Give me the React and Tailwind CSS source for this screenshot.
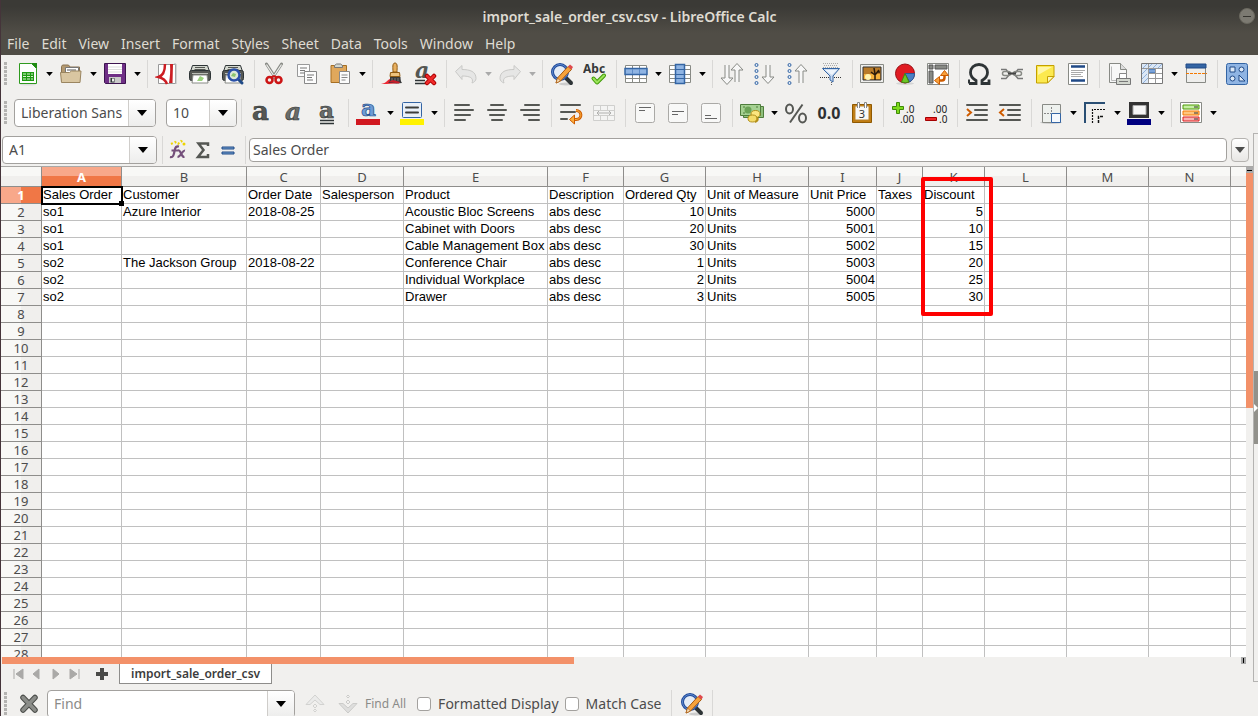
import React, { useState } from 'react'

const menus = ['File', 'Edit', 'View', 'Insert', 'Format', 'Styles', 'Sheet', 'Data', 'Tools', 'Window', 'Help']

const columns = [
    { name: 'A', width: 80 },
    { name: 'B', width: 125 },
    { name: 'C', width: 74 },
    { name: 'D', width: 83 },
    { name: 'E', width: 144 },
    { name: 'F', width: 76 },
    { name: 'G', width: 82 },
    { name: 'H', width: 103 },
    { name: 'I', width: 68 },
    { name: 'J', width: 46 },
    { name: 'K', width: 62 },
    { name: 'L', width: 82 },
    { name: 'M', width: 82 },
    { name: 'N', width: 82 },
]

const data = [
    ['Sales Order', 'Customer', 'Order Date', 'Salesperson', 'Product', 'Description', 'Ordered Qty', 'Unit of Measure', 'Unit Price', 'Taxes', 'Discount'],
    ['so1', 'Azure Interior', '2018-08-25', '', 'Acoustic Bloc Screens', 'abs desc', 10, 'Units', 5000, '', 5],
    ['so1', '', '', '', 'Cabinet with Doors', 'abs desc', 20, 'Units', 5001, '', 10],
    ['so1', '', '', '', 'Cable Management Box', 'abs desc', 30, 'Units', 5002, '', 15],
    ['so2', 'The Jackson Group', '2018-08-22', '', 'Conference Chair', 'abs desc', 1, 'Units', 5003, '', 20],
    ['so2', '', '', '', 'Individual Workplace', 'abs desc', 2, 'Units', 5004, '', 25],
    ['so2', '', '', '', 'Drawer', 'abs desc', 3, 'Units', 5005, '', 30],
]

const rowCount = 28

const Svg = ({ children }) => (
    <svg width="24" height="24" viewBox="0 0 24 24" fill="none" className="shrink-0">{children}</svg>
)

const lines = (list, color = '#555753', w = 2) => list.map(([x1, x2, y], i) => (
    <path key={i} d={`M${x1} ${y}H${x2}`} stroke={color} strokeWidth={w} strokeLinecap="round" />
))

const Printer = () => (
    <>
        <path d="M4.5 3.5h15l2 6h-19z" fill="#d3d7cf" stroke="#2e3436" />
        <path d="M7 5.5h10M6.500 7.500h11" stroke="#555753" />
        <rect x="1.500" y="8.500" width="21" height="10" rx="2" fill="#555753" stroke="#2e3436" />
        <path d="M4 11.500h16" stroke="#babdb6" />
        <path d="M5 13h14l1 8H4z" fill="#fff" stroke="#888a85" />
        <path d="M9 19l3-5 4 2-2 3z" fill="#9ad17c" />
    </>
)

const Lens = () => (
    <>
        <ellipse cx="16" cy="22" rx="7" ry="1.500" fill="#ccc" />
        <path d="M15 15l6 6" stroke="#2e3436" strokeWidth="4" strokeLinecap="round" />
        <circle cx="10" cy="10" r="7.500" fill="#e4ecf6" stroke="#204a9a" strokeWidth="3" />
        <circle cx="10" cy="10" r="7.500" stroke="#5f8ad0" strokeWidth="1" />
        <path d="M6 21l1.500-5L18 4.500l3.500 3L10.500 19z" fill="#f7a23b" stroke="#a85a10" />
        <path d="M6 21l1.500-5 3 3z" fill="#f8e0b8" stroke="#a85a10" strokeWidth=".7" />
        <path d="M18 4.500L20 2.500l3 2.500-1.500 2.500z" fill="#e0484c" />
    </>
)

const Grid = () => (
    <>
        <path d="M1.500 3.500h21v17h-21z" fill="#fff" stroke="#888a85" />
        <path d="M1.500 12.500h21M1.500 16.500h21M8.500 3.500v17M15.500 3.500v17M1.500 7.500h21" stroke="#888a85" />
    </>
)

const down = 'M6 1.500v14.500H1.500L8 22.500l6.500-6.500H10V1.500z'

const icons = {
    newDoc: (
        <Svg>
            <ellipse cx="13" cy="22.500" rx="8" ry="1" fill="#ddd" />
            <path d="M4.500 1.500h12l5 5v15h-17z" fill="#fdfffd" stroke="#2e9a1e" />
            <path d="M16 1h6v6z" fill="#1f8a12" />
            <path d="M7 10h12v9H7z" fill="#1f9a12" />
            <path d="M8 12h3M12 12h3M16 12h2M8 14.500h3M12 14.500h3M16 14.500h2M8 17h3M12 17h3M16 17h2" stroke="#d8f5d0" />
        </Svg>
    ),
    open: (
        <Svg>
            <path d="M2.500 19V4.500l1-1.500h6l1.500 2h9.500v14z" fill="#b49a72" stroke="#8a7350" />
            <path d="M6.500 5.500h13v6h-13z" fill="#fff" stroke="#777" />
            <path d="M8 8h9" stroke="#555" />
            <path d="M1.500 10.500h9l2-1.500h9.500l-1 11.500H2.500z" fill="#d9c6a1" stroke="#9a8560" />
        </Svg>
    ),
    save: (
        <Svg>
            <path d="M1.500 1.500h21v20h-20l-1-1z" fill="#6f2f86" stroke="#3d1450" />
            <path d="M5 2h14v10H5z" fill="#fff" />
            <path d="M5 5h14M5 7.500h14M5 10h14" stroke="#ddd" />
            <path d="M6 15h12v6H6z" fill="#c9c9c9" />
            <path d="M7.500 16h4v4.500h-4z" fill="#2e3436" />
            <path d="M9 16.500h2v3H9z" fill="#eee" />
        </Svg>
    ),
    pdf: (
        <Svg>
            <path d="M3.500 2.500h17v19h-17z" fill="#fff" stroke="#999" />
            <path d="M10 2c0 9-3 12-6.500 13 4 1 7 3 8.500 7" stroke="#cc1d22" strokeWidth="2.500" />
            <path d="M15 2h3l-.500 19H14c1-6 1.500-12 1-19z" fill="#cc1d22" />
            <path d="M19 2h2v20" stroke="#b5b5b5" />
        </Svg>
    ),
    print: <Svg><Printer /></Svg>,
    preview: (
        <Svg>
            <Printer />
            <path d="M17 17l4 4" stroke="#204a87" strokeWidth="3" strokeLinecap="round" />
            <circle cx="13" cy="13" r="5.500" fill="#dbe8d5" stroke="#2a50a8" strokeWidth="2.500" />
            <path d="M10 14l2-3 3 1-1 3z" fill="#8cc66e" />
        </Svg>
    ),
    cut: (
        <Svg>
            <path d="M4.500 2L13.500 16M19.500 2L10.500 16" stroke="#888a85" strokeWidth="3" strokeLinecap="round" />
            <path d="M4.500 2.500L13 15.500M19.500 2.500L11 15.500" stroke="#eeeeec" strokeWidth="1.200" />
            <circle cx="7.500" cy="18" r="3" stroke="#cc1414" strokeWidth="2.500" />
            <circle cx="16.500" cy="18" r="3" stroke="#cc1414" strokeWidth="2.500" />
            <path d="M9 15.500l3-1.500 3 1.500" stroke="#cc1414" strokeWidth="2" />
        </Svg>
    ),
    copy: (
        <Svg>
            <path d="M2.500 2.500h12v12h-12z" fill="#fcfcfc" stroke="#999" />
            <path d="M5 6h7M5 8.500h5M5 11h6" stroke="#777" />
            <path d="M9.500 9.500h12v12h-12z" fill="#fcfcfc" stroke="#888" />
            <path d="M12 13h7M12 15.500h5M12 18h6" stroke="#777" />
        </Svg>
    ),
    paste: (
        <Svg>
            <path d="M3 3.500h15.500v17H3z" fill="#e0a85c" stroke="#a66f22" />
            <path d="M6.500 5.500v-2l2-1.500h4l2 1.500v2z" fill="#d3d7cf" stroke="#777" />
            <path d="M11.500 9.500h10v12h-10z" fill="#fcfcfc" stroke="#888" />
            <path d="M13.500 13h6M13.500 15.500h6M13.500 18h4" stroke="#888" />
        </Svg>
    ),
    brush: (
        <Svg>
            <path d="M1 22c6-1 6-4 9-5l11 2c0 2-4 3-20 3z" fill="#ee2a35" />
            <path d="M13 10c0-4-1-9 2-9s2 5 2 9z" fill="#e8b060" stroke="#8f5a12" />
            <path d="M10.500 10.500h9l.500 4h-10z" fill="#edc27d" stroke="#8f5a12" />
            <path d="M10 15h10.500c0 3 .5 5 1.500 6-5 1-11 0-14 0 2-1 2-4 2-6z" fill="#38393a" />
            <path d="M12 16v3M15 16v3M18 16v3" stroke="#777" />
            <path d="M8 20l5-2 7 2-1 1.500z" fill="#c81d2a" />
        </Svg>
    ),
    clear: (
        <Svg>
            <text x="2" y="16" fontFamily="DejaVu Serif" fontWeight="bold" fontStyle="italic" fontSize="22" fill="#555753">a</text>
            <path d="M2 18.500h10M2 21.500h10" stroke="#2e3436" strokeWidth="1.500" />
            <path d="M14 14l7 7M21 14l-7 7" stroke="#a00" strokeWidth="4.500" strokeLinecap="round" />
            <path d="M14 14l7 7M21 14l-7 7" stroke="#ef2929" strokeWidth="2.500" strokeLinecap="round" />
        </Svg>
    ),
    undo: (
        <Svg>
            <path d="M1.500 9.500L8 3.500v4c8 0 14 2 14 9 0 2-2 4-4 4.500 2-5-2-7-10-7v3.500z" fill="#e6e6e5" stroke="#c9c9c7" />
        </Svg>
    ),
    redo: (
        <Svg>
            <path d="M22.500 9.500L16 3.500v4c-8 0-14 2-14 9 0 2 2 4 4 4.500-2-5 2-7 10-7v3.500z" fill="#e6e6e5" stroke="#c9c9c7" />
        </Svg>
    ),
    find: <Svg><Lens /></Svg>,
    spell: (
        <Svg>
            <text x="0" y="11" fontFamily="Noto Sans" fontWeight="bold" fontSize="12" fill="#36393a">Abc</text>
            <path d="M10.500 16.500l3.500 4 7-7" stroke="#3f9a06" strokeWidth="4" strokeLinecap="round" strokeLinejoin="round" />
            <path d="M10.500 16.500l3.500 4 7-7" stroke="#9be35a" strokeWidth="2" strokeLinecap="round" strokeLinejoin="round" />
        </Svg>
    ),
    row: (
        <Svg>
            <Grid />
            <path d="M1 6.500h22v6H1z" fill="#8fb4e3" stroke="#3465a4" strokeWidth="1.500" />
            <path d="M8.500 7v5M15.500 7v5" stroke="#5f8cc8" />
        </Svg>
    ),
    col: (
        <Svg>
            <Grid />
            <path d="M7.500 2.500h9v19h-9z" fill="#8fb4e3" stroke="#3465a4" strokeWidth="1.500" />
            <path d="M8 7.500h8M8 12.500h8M8 16.500h8" stroke="#3465a4" />
        </Svg>
    ),
    sort: (
        <Svg>
            <path d="M5 3v13H1l6 6.500 6-6.500H9V3" fill="#f7f7f7" stroke="#888a85" />
            <path d="M15 20V8h-4l6-6.500L23 8h-4v12" fill="#f7f7f7" stroke="#888a85" />
        </Svg>
    ),
    sortAsc: (
        <Svg>
            {[3, 9, 15, 21].map(y => <circle key={y} cx="3.500" cy={y} r="1.500" stroke="#3465a4" fill="#dce8f6" />)}
            <path d="M13 3v12H9l6 6.500 6-6.500h-4V3" fill="#f7f7f7" stroke="#888a85" />
        </Svg>
    ),
    sortDesc: (
        <Svg>
            {[3, 9, 15, 21].map(y => <circle key={y} cx="3.500" cy={y} r="1.500" stroke="#3465a4" fill="#dce8f6" />)}
            <path d="M13 21V9H9l6-6.500L21 9h-4v12" fill="#f7f7f7" stroke="#888a85" />
        </Svg>
    ),
    filter: (
        <Svg>
            <path d="M4 1.500h16M5 3.500h14M4 5.500h16" stroke="#aaa" strokeDasharray="1 1" />
            <path d="M3.500 6.500h17L14 14v6l-3-2v-4z" fill="#c9daf0" stroke="#3465a4" />
            <path d="M6 8h12l-5 5z" fill="#eef4fb" />
            <path d="M1 15.500h10M15 15.500h8" stroke="#333" strokeDasharray="1 1" />
            <path d="M12.500 20v3" stroke="#666" strokeDasharray="1 1" />
        </Svg>
    ),
    image: (
        <Svg>
            <path d="M.500 2.500h23v18H.500z" fill="#eeeeec" stroke="#888a85" />
            <path d="M3 5h18v13H3z" fill="#b87a28" stroke="#333" />
            <path d="M4 12h16v5H4z" fill="#f7b23b" />
            <circle cx="8" cy="15" r="3" fill="#fff3b0" />
            <path d="M15 18v-5l-4-3M15 13l4-5M15 12l-1-6M17 10h3" stroke="#2a1a0a" strokeWidth="1.500" />
        </Svg>
    ),
    chart: (
        <Svg>
            <ellipse cx="12" cy="21.500" rx="9" ry="1.500" fill="#d5d5d5" />
            <circle cx="12" cy="11.500" r="9.500" fill="#e01b22" stroke="#9a1015" />
            <path d="M12 11.500h9.500a9.500 9.500 0 0 1-5 8.500z" fill="#4a7fc4" stroke="#2c5896" />
            <path d="M12 11.500l4 8.500a9.500 9.500 0 0 1-7.500 0z" fill="#6cc624" stroke="#3f8a10" />
        </Svg>
    ),
    pivot: (
        <Svg>
            <path d="M1.500 1.500h21v21h-21z" fill="#fff" stroke="#888a85" />
            <path d="M3 3h4v4H3zM9 3h12v4H9zM3 9h4v12H3z" fill="#888a85" stroke="#555" />
            <path d="M12 18.500h4c2 0 2.500-1 2.500-3v-3" stroke="#ce5c00" strokeWidth="2.500" />
            <path d="M18.500 8.500l4 5h-8zM8.500 18.500l5-4v8z" fill="#f9a13a" stroke="#ce5c00" />
        </Svg>
    ),
    omega: (
        <Svg>
            <path d="M2 21.500h7v-3C5.500 16.500 3.500 14 3.500 10.500 3.500 6 7 2.500 12 2.500s8.500 3.500 8.500 8c0 3.500-2 6-5.500 8v3h7v-4" stroke="#2e3436" strokeWidth="2.800" />
            <path d="M2 17.500v4" stroke="#2e3436" strokeWidth="2" />
        </Svg>
    ),
    link: (
        <Svg>
            <path d="M1 7.500h5l3 4h6l3-4h5M1 16.500h5l3-3.500M15 13l3 3.500h5" stroke="#777" strokeWidth="1.500" />
            <rect x="2.500" y="9.500" width="8" height="4" rx="2" stroke="#888a85" strokeWidth="1.500" />
            <rect x="13.500" y="9.500" width="8" height="4" rx="2" stroke="#888a85" strokeWidth="1.500" />
            <path d="M8 11.500h8" stroke="#444" strokeWidth="2" />
        </Svg>
    ),
    note: (
        <Svg>
            <path d="M3.500 3.500h17.500v11l-6.500 6.500h-11z" fill="#fce94f" stroke="#c4a000" />
            <path d="M5 5h14l-14 8z" fill="#fff6a8" />
            <path d="M14.500 21v-6.500H21z" fill="#fdf6b5" stroke="#c4a000" />
        </Svg>
    ),
    header: (
        <Svg>
            <path d="M2.500 1.500h19v21h-19z" fill="#fff" stroke="#888a85" />
            <path d="M5 4.500h14M5 18.500h14" stroke="#204a87" strokeWidth="2.500" />
            <path d="M5 8.500h14M5 10.500h12M5 12.500h10M5 14.500h12" stroke="#aaa" />
        </Svg>
    ),
    printArea: (
        <Svg>
            <path d="M2.500 1.500h11l6 6v13h-17z" fill="#f8f8f8" stroke="#888a85" />
            <path d="M13.500 1.500v6h6" fill="#ddd" stroke="#888a85" />
            <path d="M4.500 4.500v14h8" stroke="#bbb" />
            <path d="M12.500 11.500h7v5h-7z" fill="#fff" stroke="#888" />
            <path d="M9.500 16.500h14v6h-14z" fill="#d3d7cf" stroke="#777" />
            <path d="M12 19.500h9" stroke="#777" />
        </Svg>
    ),
    freeze: (
        <Svg>
            <path d="M1.500 1.500h21v20h-21z" fill="#fff" stroke="#777" />
            <path d="M2 21V2h20v4H8v15" fill="#dbe7f5" />
            <path d="M2 7l5-5M2 12L12 2M2 17l5-5M3 21l5-5M13 6l4-4M18 6l4-4" stroke="#8fb0dc" />
            <path d="M8.500 7h7v4h-7z" fill="#7ba4db" stroke="#3465a4" />
            <path d="M8.500 2v19M2 6.500h20M15.500 7v14M9 11.500h13M9 16.500h13" stroke="#999" />
        </Svg>
    ),
    split: (
        <Svg>
            <path d="M2.500 2.500h19v18h-19z" fill="#eeeeec" stroke="#888a85" />
            <path d="M2 2h20v4H2z" fill="#3465a4" stroke="#204a87" />
            <path d="M2 11.500h21" stroke="#f57900" strokeDasharray="3 1" />
        </Svg>
    ),
    shapes: (
        <Svg>
            <rect x="1.500" y="1.500" width="21" height="21" rx="2" fill="#8fb4e3" stroke="#3465a4" />
            <path d="M5 5h5v5H5zM14 13v6h6z" fill="#dce8f6" stroke="#204a87" />
            <circle cx="16.500" cy="7.500" r="2.500" fill="#dce8f6" stroke="#204a87" />
            <circle cx="7.500" cy="16.500" r="2.500" fill="#dce8f6" stroke="#204a87" />
        </Svg>
    ),
    bold: (
        <Svg>
            <text x="3" y="19" fontFamily="DejaVu Serif" fontWeight="bold" fontSize="26" fill="#555753" stroke="#2e3436" strokeWidth=".6">a</text>
        </Svg>
    ),
    italic: (
        <Svg>
            <text x="3" y="19" fontFamily="DejaVu Serif" fontWeight="bold" fontStyle="italic" fontSize="25" fill="#6a6c68" stroke="#2e3436" strokeWidth=".6">a</text>
        </Svg>
    ),
    underline: (
        <Svg>
            <text x="4" y="17" fontFamily="DejaVu Serif" fontWeight="bold" fontSize="23" fill="#6a6c68" stroke="#2e3436" strokeWidth=".6">a</text>
            <path d="M5 19.500h14M5 22.500h14" stroke="#2e3436" strokeWidth="1.500" />
        </Svg>
    ),
    fontColor: (
        <Svg>
            <text x="5" y="15" fontFamily="DejaVu Serif" fontWeight="bold" fontSize="23" fill="#6d9bd6" stroke="#204a87" strokeWidth=".7">a</text>
            <path d="M0 18h24v6H0z" fill="#d11820" />
        </Svg>
    ),
    highlight: (
        <Svg>
            <rect x="2.500" y="1.500" width="19" height="15" rx="1" fill="#e9f0f8" stroke="#3465a4" />
            {lines([[6, 18, 6.5], [6, 18, 11.5]], '#3c3e3c')}
            <path d="M0 18h24v6H0z" fill="#fff200" />
        </Svg>
    ),
    left: <Svg>{lines([[3, 17, 4], [3, 21, 9], [3, 18, 14], [3, 13, 19]])}</Svg>,
    center: <Svg>{lines([[6, 18, 4], [3, 21, 9], [5, 19, 14], [7, 17, 19]])}</Svg>,
    right: <Svg>{lines([[7, 21, 4], [3, 21, 9], [6, 21, 14], [11, 21, 19]])}</Svg>,
    wrap: (
        <Svg>
            {lines([[2, 21, 4], [2, 16, 11], [2, 8, 18]])}
            <path d="M17 9.500c6 0 7 8.500 0 9h-3" stroke="#ce5c00" strokeWidth="3" />
            <path d="M17 9.500c6 0 7 8.500 0 9h-3" stroke="#fcaf3e" strokeWidth="1" />
            <path d="M15.500 14v9l-5-4.500z" fill="#fcaf3e" stroke="#ce5c00" />
        </Svg>
    ),
    merge: (
        <Svg>
            <path d="M1.500 4.500h21v15h-21z" fill="#f4f4f3" stroke="#cfcfcd" />
            <path d="M2 9.500h20M2 14.500h20M8.500 4.500v5M15.500 4.500v5M8.500 14.500v5M15.500 14.500v5" stroke="#cfcfcd" />
            <path d="M5 12h14M7 10l-2 2 2 2M17 10l2 2-2 2" stroke="#b0b0ae" />
        </Svg>
    ),
    top: (
        <Svg>
            <rect x="2.500" y="2.500" width="19" height="19" rx="2" fill="#f8f8f7" stroke="#aaa9a6" />
            <path d="M6 6.500h12M6 9.500h6" stroke="#666" />
        </Svg>
    ),
    middle: (
        <Svg>
            <rect x="2.500" y="2.500" width="19" height="19" rx="2" fill="#f8f8f7" stroke="#aaa9a6" />
            <path d="M6 10.500h12M6 13.500h6" stroke="#666" />
        </Svg>
    ),
    bottom: (
        <Svg>
            <rect x="2.500" y="2.500" width="19" height="19" rx="2" fill="#f8f8f7" stroke="#aaa9a6" />
            <path d="M6 14.500h6M6 17.500h12" stroke="#666" />
        </Svg>
    ),
    money: (
        <Svg>
            <path d="M3.500 5.500h20v11h-20z" fill="#8fc07c" stroke="#4e7d3c" />
            <path d="M.500 3.500h20v11H.500z" fill="#a5d192" stroke="#4e7d3c" />
            <circle cx="8" cy="9" r="3.500" fill="#6ba356" />
            <path d="M3 6h2M16 6h2M3 12h2" stroke="#4e7d3c" />
            <ellipse cx="15.500" cy="13" rx="4.500" ry="3.500" fill="#fbe680" stroke="#b3901a" />
            <ellipse cx="12.500" cy="17.500" rx="4.500" ry="3.500" fill="#f4dc6a" stroke="#b3901a" />
            <path d="M17 16.500c2 2 0 4-2 4.500" stroke="#b3901a" strokeWidth="2" />
        </Svg>
    ),
    percent: (
        <Svg>
            <ellipse cx="5.500" cy="8" rx="3.500" ry="4.500" stroke="#555753" strokeWidth="2" />
            <ellipse cx="18.500" cy="17" rx="3.500" ry="4.500" stroke="#555753" strokeWidth="2" />
            <path d="M18.500 3.500L6 21.500" stroke="#555753" strokeWidth="2" />
        </Svg>
    ),
    number: (
        <Svg>
            <text x="12" y="18" textAnchor="middle" fontFamily="Noto Sans" fontWeight="bold" fontSize="16" fill="#2e3033">0.0</text>
        </Svg>
    ),
    date: (
        <Svg>
            <path d="M2.500 3.500h19v18h-19z" fill="#c17d11" stroke="#8f5902" />
            <path d="M5 5h14v14H5z" fill="#f8f8f8" stroke="#b9822a" />
            <path d="M7.500 7V1.500h2V7M14.500 7V1.500h2V7" fill="#fff" stroke="#888" />
            <text x="12" y="17" textAnchor="middle" fontFamily="Noto Sans" fontSize="11" fill="#333">3</text>
        </Svg>
    ),
    addDecimal: (
        <Svg>
            <path d="M5.500 1.500h3v4h4v3h-4v4h-3v-4h-4v-3h4z" fill="#7ddb1c" stroke="#3f8a06" />
            <text x="15" y="12" fontFamily="Noto Sans" fontSize="10" fill="#222">.0</text>
            <text x="9" y="22" fontFamily="Noto Sans" fontSize="10" fill="#222">.00</text>
        </Svg>
    ),
    delDecimal: (
        <Svg>
            <path d="M1.500 16.500h11v3h-11z" fill="#ef2929" stroke="#a40000" />
            <text x="9" y="12" fontFamily="Noto Sans" fontSize="10" fill="#222">.00</text>
            <text x="15" y="22" fontFamily="Noto Sans" fontSize="10" fill="#222">.0</text>
        </Svg>
    ),
    indentMore: (
        <Svg>
            {lines([[2, 22, 4], [10, 22, 9], [10, 22, 14], [2, 22, 19]])}
            <path d="M2 8l4 3.500L2 15" stroke="#ce5c00" strokeWidth="2" />
        </Svg>
    ),
    indentLess: (
        <Svg>
            {lines([[2, 22, 4], [10, 22, 9], [10, 22, 14], [2, 22, 19]])}
            <path d="M6 8l-4 3.500L6 15" stroke="#ce5c00" strokeWidth="2" />
        </Svg>
    ),
    borders: (
        <Svg>
            <ellipse cx="12" cy="21.500" rx="11" ry="1.500" fill="#ccc" />
            <path d="M3.500 3.500h18v18h-18z" fill="#eef1ee" stroke="#888a85" />
            <path d="M12.500 6v6M5 12.500h7" stroke="#888" strokeDasharray="2 1" />
            <path d="M12.500 12.500h9v9h-9z" fill="#f5f9fd" stroke="#3465a4" />
        </Svg>
    ),
    borderStyle: (
        <Svg>
            <path d="M2 22V2h20" stroke="#2a4f74" strokeWidth="2" />
            <path d="M9.500 22V8.500H23" stroke="#111" strokeDasharray="2 1" strokeWidth="1.200" />
            <path d="M15.500 22v-6.500H21" stroke="#111" strokeDasharray="3 1" strokeWidth="1.500" />
        </Svg>
    ),
    borderColor: (
        <Svg>
            <path d="M2 1h20v16H2z" fill="#333" />
            <path d="M6 4.500h13v9H6z" fill="#f6f6f6" stroke="#aaa" />
            <path d="M0 18h24v6H0z" fill="#00007f" />
        </Svg>
    ),
    conditional: (
        <Svg>
            <path d="M1.500 1.500h21v20h-21z" fill="#fff" stroke="#888a85" />
            <path d="M4 4h16v4H4z" fill="#c5efa2" stroke="#4e9a06" />
            <path d="M4 10h16v4H4z" fill="#fdc680" stroke="#f57900" />
            <path d="M4 16h16v4H4z" fill="#f9b3b3" stroke="#dd1c1c" />
            <path d="M15 6h4M15 12h4M15 18h4" stroke="#333" />
        </Svg>
    ),
    fx: (
        <Svg>
            <path d="M5 6l4-2 3 2 3-3 3 2" stroke="#edd400" strokeWidth="2" strokeDasharray="2 2" />
            <circle cx="18" cy="6" r="1.500" fill="#edd400" />
            <path d="M4 19c4 1 4-4 5-8 .5-2 1.500-3 4-2.500M5.500 12.500H12M12 12.500c3-1 3 7 6.500 6.500M19 12.500c-3-.5-4 6.500-7.500 6.500" stroke="#75507b" strokeWidth="2.200" />
        </Svg>
    ),
    sum: (
        <Svg>
            <path d="M17 8V5.500H7.500l5 6.500-5.500 7h10V16" stroke="#555753" strokeWidth="2.500" />
        </Svg>
    ),
    equals: (
        <Svg>
            <path d="M6 9h12v2H6zM6 14h12v2H6z" fill="#729fcf" stroke="#204a87" />
        </Svg>
    ),
    close: (
        <Svg>
            <path d="M6 5.500l12 12.500M18 5.500L6 18" stroke="#4a4c49" strokeWidth="5.500" strokeLinecap="round" />
            <path d="M6 5.500l12 12.500M18 5.500L6 18" stroke="#8b8d89" strokeWidth="3.500" strokeLinecap="round" />
        </Svg>
    ),
    findPrev: (
        <Svg>
            <path d="M3 12.500L12 3l9 9.500h-4L12 8l-5 4.500z" fill="#ebebea" stroke="#d2d2d0" />
            <path d="M12 12l2 2-2 2-2-2zM12 17l1.500 1.500L12 20l-1.500-1.500z" stroke="#d2d2d0" />
        </Svg>
    ),
    findNext: (
        <Svg>
            <path d="M3 11.500L12 21l9-9.500h-4L12 16l-5-4.500z" fill="#dededd" stroke="#cbcbc9" />
            <path d="M12 8l2 2-2 2-2-2zM12 3l1.500 1.500L12 6l-1.500-1.500z" stroke="#cbcbc9" />
        </Svg>
    ),
}

const standardBar = [
    [['newDoc', 'New', true], ['open', 'Open', true], ['save', 'Save', true]],
    [['pdf', 'Export as PDF'], ['print', 'Print'], ['preview', 'Print Preview']],
    [['cut', 'Cut'], ['copy', 'Copy'], ['paste', 'Paste', true]],
    [['brush', 'Clone Formatting'], ['clear', 'Clear Formatting']],
    [['undo', 'Undo', true, true], ['redo', 'Redo', true, true]],
    [['find', 'Find & Replace'], ['spell', 'Spelling']],
    [['row', 'Row', true], ['col', 'Column', true]],
    [['sort', 'Sort'], ['sortAsc', 'Sort Ascending'], ['sortDesc', 'Sort Descending'], ['filter', 'AutoFilter']],
    [['image', 'Insert Image'], ['chart', 'Insert Chart'], ['pivot', 'Pivot Table']],
    [['omega', 'Special Character'], ['link', 'Hyperlink'], ['note', 'Comment'], ['header', 'Headers and Footers']],
    [['printArea', 'Define Print Area'], ['freeze', 'Freeze Rows and Columns', true], ['split', 'Split Window']],
    [['shapes', 'Show Draw Functions']],
]

const formatBar = [
    [['bold', 'Bold'], ['italic', 'Italic'], ['underline', 'Underline']],
    [['fontColor', 'Font Color', true], ['highlight', 'Highlighting', true]],
    [['left', 'Align Left'], ['center', 'Center Horizontally'], ['right', 'Align Right']],
    [['wrap', 'Wrap Text'], ['merge', 'Merge Cells']],
    [['top', 'Align Top'], ['middle', 'Center Vertically'], ['bottom', 'Align Bottom']],
    [['money', 'Format as Currency', true], ['percent', 'Format as Percent'], ['number', 'Format as Number'], ['date', 'Format as Date']],
    [['addDecimal', 'Add Decimal Place'], ['delDecimal', 'Delete Decimal Place']],
    [['indentMore', 'Increase Indent'], ['indentLess', 'Decrease Indent']],
    [['borders', 'Borders', true], ['borderStyle', 'Border Style', true], ['borderColor', 'Border Color', true]],
    [['conditional', 'Conditional Formatting', true]],
]

const Separator = () => (
    <div className="flex justify-center w-2 shrink-0">
        <div className="w-px h-7 bg-[#d9d8d6]" />
    </div>
)

const Handle = () => (
    <div className="w-[10px] shrink-0 pl-[3px]">
        <div className="w-[3px] h-6 bg-[repeating-linear-gradient(to_bottom,#b4b3b1_0_3px,transparent_3px_4px)]" />
    </div>
)

const Arrow = ({ big }) => (
    <svg width={big ? 10 : 7} height={big ? 6 : 4} viewBox="0 0 10 6" className="shrink-0">
        <path d="M0 0h10L5 6z" fill="currentColor" />
    </svg>
)

const ToolButton = ({ icon, label, menu, disabled }) => (
    <>
        <button type="button" aria-label={label} disabled={disabled} className="flex items-center w-[33px] h-8 pl-1 shrink-0">
            {icons[icon]}
        </button>
        {menu && (
            <button type="button" aria-label={`${label} options`} disabled={disabled} className="flex items-center justify-center w-[11px] h-8 shrink-0 text-black disabled:text-[#aaa]">
                <Arrow />
            </button>
        )}
    </>
)

const ToolGroups = ({ groups }) => groups.map((group, i) => (
    <React.Fragment key={i}>
        {i > 0 && <Separator />}
        {group.map(([icon, label, menu, disabled]) => (
            <ToolButton key={icon} icon={icon} label={label} menu={menu} disabled={disabled} />
        ))}
    </React.Fragment>
))

const boxStyle = 'flex h-7 shrink-0 overflow-hidden rounded border border-[#a3a19e] bg-white'
const dropStyle = 'flex items-center justify-center w-[27px] shrink-0 border-l border-[#cfcdca] bg-linear-to-b from-white to-[#ededec] text-black'

const Titlebar = () => (
    <header className="text-[#dfdbd2] bg-[#504d46] shrink-0">
        <div className="relative flex items-center justify-center h-[33px] bg-linear-to-b from-[#3b3a36] from-20% to-[#504d46]">
            <h1 className="text-sm font-semibold">import_sale_order_csv.csv - LibreOffice Calc</h1>
            <button type="button" aria-label="Minimize" className="absolute flex items-center justify-center w-4 h-4 rounded-full right-[3px] top-2 bg-[#7c7a72] border border-[#6a685f]">
                <span className="w-2 h-px bg-[#35342f]" />
            </button>
        </div>
        <nav className="flex gap-3 pl-[6px] h-[22px] text-sm leading-[22px]">
            {menus.map(menu => <button key={menu} type="button">{menu}</button>)}
        </nav>
    </header>
)

const FormulaBar = () => (
    <div className="flex items-center h-[33px] pl-px shrink-0">
        <div className={`${boxStyle} w-[155px]`}>
            <input aria-label="Name Box" defaultValue="A1" className="flex-1 min-w-0 pl-1.5 text-sm outline-none" />
            <button type="button" aria-label="Show cell names" className={dropStyle}><Arrow big /></button>
        </div>
        <div className="flex items-center pl-px">
            <Separator />
            {[['fx', 'Function Wizard'], ['sum', 'Sum'], ['equals', 'Function']].map(([icon, label]) => (
                <button key={icon} type="button" aria-label={label} className="w-[25px] shrink-0">{icons[icon]}</button>
            ))}
            <Separator />
        </div>
        <input aria-label="Input line" defaultValue="Sales Order" className="flex-1 min-w-0 h-6 px-[3px] text-sm bg-white border border-[#a3a19e] rounded outline-none" />
        <button type="button" aria-label="Expand Formula Bar" className="flex items-center justify-center w-[18px] h-6 mx-1 border rounded shrink-0 border-[#b5b3b0] bg-linear-to-b from-white to-[#e8e7e5]">
            <Arrow big />
        </button>
    </div>
)

const Sheet = () => (
    <div className="relative flex-1 min-w-0 overflow-hidden bg-white">
        <table className="w-full table-fixed border-separate border-spacing-0 font-['Liberation_Sans',sans-serif] text-[13px] leading-4 text-black">
            <colgroup>
                <col className="w-[41px]" />
                {columns.map(col => <col key={col.name} style={{ width: col.width }} />)}
                <col />
            </colgroup>
            <thead className="font-['Noto_Sans',sans-serif] text-[#4c4c4c]">
                <tr className="h-5">
                    <th aria-label="Select all" className="border-r border-b border-[#8e8d8b] bg-linear-to-b from-[#f8f8f6] from-50% to-[#f0efed] to-50%" />
                    {columns.map(col => (
                        <th
                            key={col.name}
                            scope="col"
                            className={`p-0 border-r border-b border-[#8e8d8b] ${col.name === 'A' ? 'font-bold text-white bg-linear-to-b from-[#f8a88a] from-50% to-[#f07746] to-50%' : 'font-normal bg-linear-to-b from-[#f8f8f6] from-50% to-[#f0efed] to-50%'}`}
                        >
                            {col.name}
                        </th>
                    ))}
                    <th aria-label="O" className="border-b border-[#8e8d8b] bg-linear-to-b from-[#f8f8f6] from-50% to-[#f0efed] to-50%" />
                </tr>
            </thead>
            <tbody>
                {Array.from({ length: rowCount }, (_, r) => (
                    <tr key={r} className="h-[17px]">
                        <th
                            scope="row"
                            className={`p-0 border-r border-b border-[#8e8d8b] font-['Noto_Sans',sans-serif] ${r === 0 ? 'font-bold text-white bg-linear-to-r from-[#f8a88a] from-50% to-[#f07746] to-50%' : 'font-normal text-[#4c4c4c] bg-linear-to-r from-[#f8f8f6] from-50% to-[#f0efed] to-50%'}`}
                        >
                            {r + 1}
                        </th>
                        {columns.map((col, c) => {
                            const value = data[r]?.[c] ?? ''
                            const active = r === 0 && c === 0
                            return (
                                <td
                                    key={col.name}
                                    className={`px-px border-r border-b border-[#c0c0c0] whitespace-nowrap ${typeof value === 'number' ? 'text-right' : 'text-left'} ${active ? 'relative outline-2 outline-black -outline-offset-1' : ''}`}
                                >
                                    {value}
                                    {active && <span className="absolute -right-[3px] -bottom-[3px] w-[5px] h-[5px] bg-black" />}
                                </td>
                            )
                        })}
                        <td className="p-0 border-b border-[#c0c0c0]" />
                    </tr>
                ))}
            </tbody>
        </table>
        {/* marker around the discount column */}
        <div className="absolute left-[920px] top-[10px] w-[72px] h-[139px] border-4 border-[#fe0000] rounded-xs" />
    </div>
)

const VerticalScroll = () => (
    <div className="flex flex-col w-[7px] shrink-0 bg-[#f1f0ee]">
        <div className="flex items-center h-[6px] bg-[#aaa]">
            <div className="w-[5px] h-px mx-auto bg-black" />
        </div>
        <div className="h-[48%] bg-[#f39169]" />
    </div>
)

const HorizontalScroll = () => (
    <div className="flex justify-between h-[7px] pl-px pr-[7px] shrink-0">
        <div className="w-[46%] bg-[#f39169]" />
        <div className="flex justify-center w-[5px] py-px bg-[#aaa]">
            <div className="w-px bg-black" />
        </div>
    </div>
)

const navPaths = [
    ['First sheet', 'M3 1v10M12 1L5 6l7 5z'],
    ['Previous sheet', 'M9 1L3 6l6 5z'],
    ['Next sheet', 'M4 1l6 5-6 5z'],
    ['Last sheet', 'M2 1l7 5-7 5zM11 1v10'],
]

const SheetTabs = () => (
    <div className="flex items-start h-5 shrink-0">
        <div className="flex items-center h-5 pl-[7px]">
            {navPaths.map(([label, d]) => (
                <button key={label} type="button" aria-label={label} className="flex justify-center w-[19px]">
                    <svg width="13" height="12" viewBox="0 0 13 12"><path d={d} fill="#aaa9a7" stroke="#aaa9a7" /></svg>
                </button>
            ))}
            <button type="button" aria-label="Add Sheet" className="flex justify-center w-[35px]">
                <svg width="12" height="12" viewBox="0 0 12 12"><path d="M6 0v12M0 6h12" stroke="#4a4a48" strokeWidth="4" /></svg>
            </button>
        </div>
        <button type="button" className="h-5 px-[11px] text-xs font-semibold bg-white border border-t-0 border-[#8e8d8b] text-[#3c3c3c]">
            import_sale_order_csv
        </button>
    </div>
)

const Check = ({ label }) => (
    <label className="flex items-center gap-[7px] pr-[6px] text-sm shrink-0">
        <input type="checkbox" className="appearance-none size-3.5 rounded-[3px] border border-[#a3a19e] bg-white checked:bg-[#f07746]" />
        {label}
    </label>
)

const FindBar = () => (
    <div className="flex items-center h-10 shrink-0">
        <Handle />
        <button type="button" aria-label="Close Find Bar" className="w-9 pl-[6px] shrink-0">{icons.close}</button>
        <div className={`${boxStyle} w-[248px]`}>
            <input aria-label="Find" placeholder="Find" className="flex-1 min-w-0 pl-1.5 text-sm outline-none placeholder:text-[#8b8b89]" />
            <button type="button" aria-label="Find history" className={dropStyle}><Arrow big /></button>
        </div>
        <div className="flex items-center pl-1">
            <ToolButton icon="findPrev" label="Find Previous" disabled />
            <ToolButton icon="findNext" label="Find Next" disabled />
        </div>
        <button type="button" disabled className="pr-[11px] text-xs text-[#8b8b89] shrink-0">Find All</button>
        <Check label="Formatted Display" />
        <Check label="Match Case" />
        <Separator />
        <ToolButton icon="find" label="Find & Replace" />
        <Separator />
    </div>
)

export default function App() {
    const [font, setFont] = useState('Liberation Sans')
    const [size, setSize] = useState('10')

    return (
        <div className="flex flex-col h-screen overflow-hidden border-l border-[#45343a] bg-[#f1f0ee] font-['Noto_Sans',sans-serif] text-[#4c4c4c]">
            <Titlebar />
            <div className="flex items-center h-[38px] overflow-hidden shrink-0">
                <Handle />
                <ToolGroups groups={standardBar} />
            </div>
            <div className="flex items-center h-10 overflow-hidden shrink-0">
                <Handle />
                <div className="flex gap-[10px] pl-[3px]">
                    <div className={`${boxStyle} w-[142px]`}>
                        <select aria-label="Font Name" value={font} onChange={e => setFont(e.target.value)} className="flex-1 min-w-0 pl-1.5 text-sm appearance-none outline-none">
                            <option>Liberation Sans</option>
                            <option>Liberation Serif</option>
                        </select>
                        <span className={dropStyle}><Arrow big /></span>
                    </div>
                    <div className={`${boxStyle} w-[71px]`}>
                        <select aria-label="Font Size" value={size} onChange={e => setSize(e.target.value)} className="flex-1 min-w-0 pl-1.5 text-sm appearance-none outline-none">
                            <option>10</option>
                            <option>12</option>
                        </select>
                        <span className={dropStyle}><Arrow big /></span>
                    </div>
                </div>
                <Separator />
                <ToolGroups groups={formatBar} />
            </div>
            <div className="flex flex-1 min-h-0">
                <main className="flex flex-col flex-1 min-w-0">
                    <FormulaBar />
                    <div className="flex flex-1 min-h-0 border-t border-[#a9a8a6]">
                        <Sheet />
                        <VerticalScroll />
                    </div>
                    <HorizontalScroll />
                    <SheetTabs />
                </main>
                <aside className="flex items-center w-[5px] mb-[2px] border-t border-b border-l border-[#b4b3b1] shrink-0">
                    <button type="button" aria-label="Show sidebar" className="flex items-center w-full h-[73px] bg-[#92918b]">
                        <svg width="4" height="8" viewBox="0 0 4 8"><path d="M0 0l4 4-4 4z" fill="#fff" /></svg>
                    </button>
                </aside>
            </div>
            <div className="h-8 overflow-hidden shrink-0">
                <FindBar />
            </div>
        </div>
    )
}
